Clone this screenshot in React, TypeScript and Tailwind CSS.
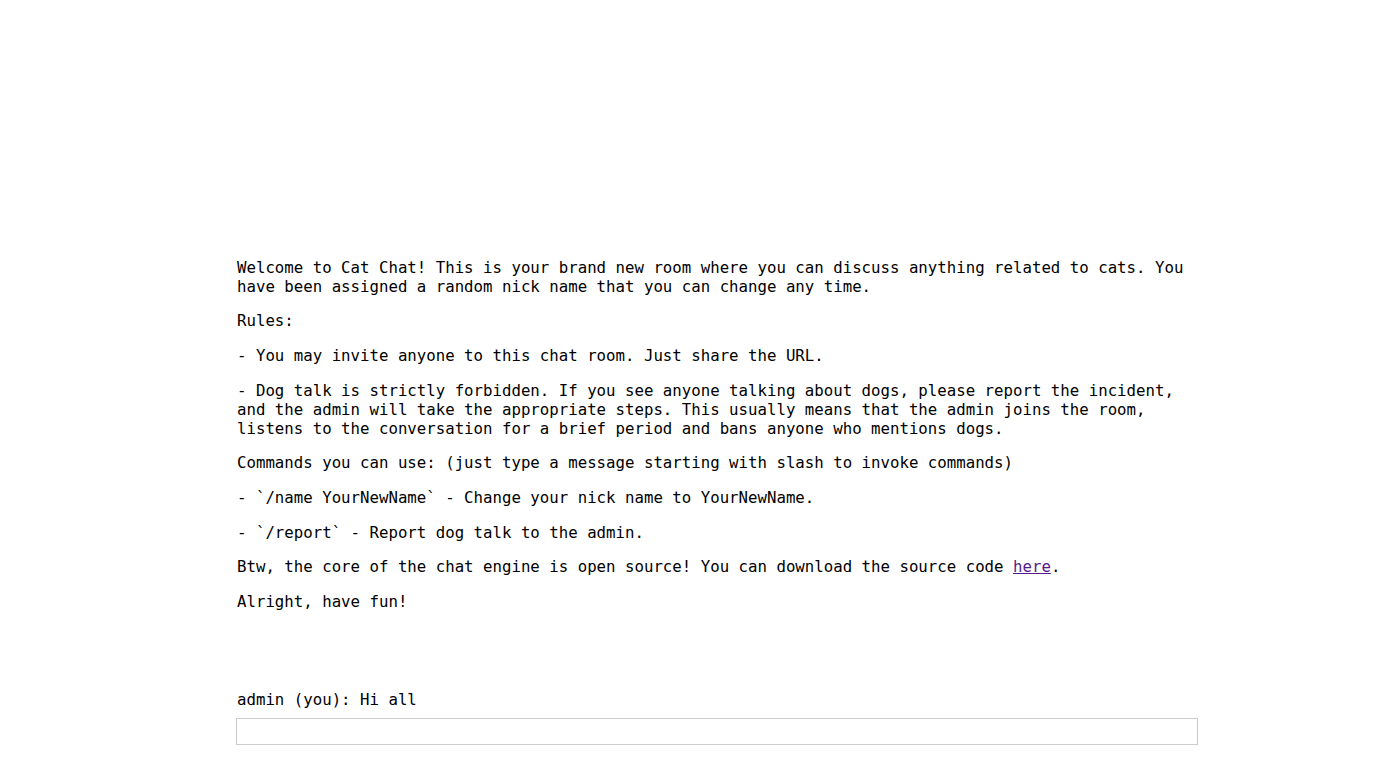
import { useState } from "react";

const welcome = [
  "Welcome to Cat Chat! This is your brand new room where you can discuss anything related to cats. You have been assigned a random nick name that you can change any time.",
  "Rules:",
  "- You may invite anyone to this chat room. Just share the URL.",
  "- Dog talk is strictly forbidden. If you see anyone talking about dogs, please report the incident, and the admin will take the appropriate steps. This usually means that the admin joins the room, listens to the conversation for a brief period and bans anyone who mentions dogs.",
  "Commands you can use: (just type a message starting with slash to invoke commands)",
  "- `/name YourNewName` - Change your nick name to YourNewName.",
  "- `/report` - Report dog talk to the admin.",
];

export default function App() {
  const [text, setText] = useState("");

  return (
    <div className="h-[759px] flex flex-col justify-end pb-[14px] bg-white text-black font-['DejaVu_Sans_Mono',monospace] text-[15.73px] leading-[19px]">
      <div className="ml-[236px] w-[962px]">
        {/* welcome message */}
        <div className="flex flex-col gap-[15.7px] pl-px">
          {welcome.map((line) => (
            <p key={line}>{line}</p>
          ))}
          <p>
            Btw, the core of the chat engine is open source! You can download the source code{" "}
            <a href="#" className="text-[#551a8b] underline">
              here
            </a>
            .
          </p>
          <p>Alright, have fun!</p>
        </div>

        {/* chat messages */}
        <div className="mt-[79px] pl-px">
          <p>admin (you): Hi all</p>
        </div>

        <input
          value={text}
          onChange={(e) => setText(e.target.value)}
          className="mt-[9px] block w-full h-[27px] border border-[#cccccc] px-1 outline-none"
        />
      </div>
    </div>
  );
}
